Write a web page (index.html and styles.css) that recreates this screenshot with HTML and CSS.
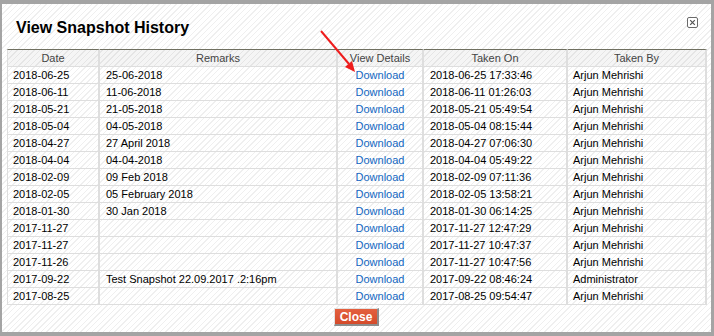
FILE: index.html
```html
<html>
<head>
<title>View Snapshot History</title>
<link rel="stylesheet" href="styles.css">
</head>
<body>
  <div class="dialog">
    <div class="dialog-head">
      <h1 class="dialog-title">View Snapshot History</h1>
      <span class="dialog-close">
        <svg width="11" height="11" viewBox="0 0 11 11"><rect x="0.5" y="0.5" width="10" height="10" rx="1.5" fill="#fff" stroke="#6a6a6a"/><path d="M3.2 3.2 L7.8 7.8 M7.8 3.2 L3.2 7.8" stroke="#555" stroke-width="1.2"/></svg>
      </span>
    </div>
    <table class="history">
      <thead>
        <tr>
          <th class="col-date">Date</th>
          <th class="col-remarks">Remarks</th>
          <th class="col-view">View Details</th>
          <th class="col-on">Taken On</th>
          <th class="col-by">Taken By</th>
        </tr>
      </thead>
      <tbody>
        <tr><td>2018-06-25</td><td>25-06-2018</td><td class="link"><a href="#">Download</a></td><td>2018-06-25 17:33:46</td><td>Arjun Mehrishi</td></tr>
        <tr><td>2018-06-11</td><td>11-06-2018</td><td class="link"><a href="#">Download</a></td><td>2018-06-11 01:26:03</td><td>Arjun Mehrishi</td></tr>
        <tr><td>2018-05-21</td><td>21-05-2018</td><td class="link"><a href="#">Download</a></td><td>2018-05-21 05:49:54</td><td>Arjun Mehrishi</td></tr>
        <tr><td>2018-05-04</td><td>04-05-2018</td><td class="link"><a href="#">Download</a></td><td>2018-05-04 08:15:44</td><td>Arjun Mehrishi</td></tr>
        <tr><td>2018-04-27</td><td>27 April 2018</td><td class="link"><a href="#">Download</a></td><td>2018-04-27 07:06:30</td><td>Arjun Mehrishi</td></tr>
        <tr><td>2018-04-04</td><td>04-04-2018</td><td class="link"><a href="#">Download</a></td><td>2018-04-04 05:49:22</td><td>Arjun Mehrishi</td></tr>
        <tr><td>2018-02-09</td><td>09 Feb 2018</td><td class="link"><a href="#">Download</a></td><td>2018-02-09 07:11:36</td><td>Arjun Mehrishi</td></tr>
        <tr><td>2018-02-05</td><td>05 February 2018</td><td class="link"><a href="#">Download</a></td><td>2018-02-05 13:58:21</td><td>Arjun Mehrishi</td></tr>
        <tr><td>2018-01-30</td><td>30 Jan 2018</td><td class="link"><a href="#">Download</a></td><td>2018-01-30 06:14:25</td><td>Arjun Mehrishi</td></tr>
        <tr><td>2017-11-27</td><td></td><td class="link"><a href="#">Download</a></td><td>2017-11-27 12:47:29</td><td>Arjun Mehrishi</td></tr>
        <tr><td>2017-11-27</td><td></td><td class="link"><a href="#">Download</a></td><td>2017-11-27 10:47:37</td><td>Arjun Mehrishi</td></tr>
        <tr><td>2017-11-26</td><td></td><td class="link"><a href="#">Download</a></td><td>2017-11-27 10:47:56</td><td>Arjun Mehrishi</td></tr>
        <tr><td>2017-09-22</td><td>Test Snapshot 22.09.2017 .2:16pm</td><td class="link"><a href="#">Download</a></td><td>2017-09-22 08:46:24</td><td>Administrator</td></tr>
        <tr><td>2017-08-25</td><td></td><td class="link"><a href="#">Download</a></td><td>2017-08-25 09:54:47</td><td>Arjun Mehrishi</td></tr>
      </tbody>
    </table>
    <div class="dialog-foot">
      <button class="btn-close">Close</button>
    </div>
    <!-- red annotation arrow pointing at the first Download link -->
    <svg class="pointer" width="714" height="336" viewBox="0 0 714 336">
      <line x1="321" y1="31" x2="349" y2="64" stroke="#ee1c1c" stroke-width="2"/>
      <polygon points="355,72 345,67 352,61" fill="#ee1c1c"/>
    </svg>
  </div>
</body>
</html>
```

FILE: styles.css
```css
html,body { margin: 0; padding: 0; }
body { font-family: "Liberation Sans", Arial, sans-serif; font-size: 11px; color: #000; }
.dialog { position: relative; box-sizing: border-box; width: 714px; height: 336px; border-style: solid; border-color: #a4a4a4; border-width: 4px 3px 4px 2px; background: repeating-linear-gradient(135deg, #fff 0 3px, #efefef 3px 4px); }
.dialog-head { display: flex; justify-content: space-between; align-items: flex-start; padding: 14px 13px 0 14px; }
.dialog-title { margin: 0; font-size: 16px; line-height: 20px; font-weight: bold; color: #000; }
.dialog-close { display: block; width: 11px; height: 11px; margin-top: -1px; }
.dialog-close svg { display: block; }
.history { table-layout: fixed; width: 700px; margin: 11px 0 0 5px; border-collapse: separate; border-spacing: 0; font-family: "Liberation Sans", Arial, sans-serif; font-size: 11px; color: #000; }
.history th, .history td { box-sizing: border-box; height: 17px; padding: 0 5px; line-height: 16px; border-bottom: 1px solid #dedede; border-right: 2px solid #dedede; white-space: nowrap; overflow: hidden; text-align: left; }
.history th:first-child, .history td:first-child { border-left: 1px solid #dedede; }
.history td:nth-child(2), .history td:nth-child(4) { padding-left: 6px; }
.history th { font-weight: normal; color: #444; text-align: center; background: rgba(0,0,0,0.04); border-top: 1px solid #707060; height: 18px; }
.col-date { width: 93px; }
.col-remarks { width: 238px; }
.col-view { width: 86px; }
.col-on { width: 144px; }
.col-by { width: 139px; }
.history td.link { text-align: center; }
.history a { color: #1467c2; text-decoration: none; }
.dialog-foot { display: flex; justify-content: center; padding-top: 3px; }
.btn-close { font-family: "Liberation Sans", Arial, sans-serif; font-size: 12px; font-weight: bold; color: #fff; background: linear-gradient(#e4603f, #d44a2a); border-style: solid; border-width: 1px 2px 2px 1px; border-color: #e2e2e2 #8c8c8c #8c8c8c #e2e2e2; padding: 0 5px; height: 18px; line-height: 14px; cursor: pointer; }
.pointer { position: absolute; left: -2px; top: -4px; pointer-events: none; }
```
